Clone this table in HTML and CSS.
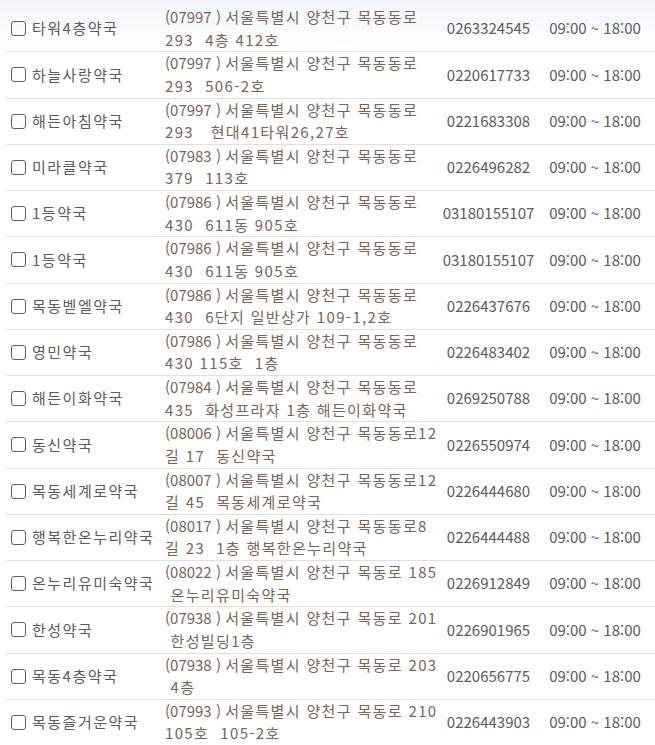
FILE: index.html
```html
<!DOCTYPE html>
<html lang="ko">
<head>
<meta charset="utf-8">
<title>약국 목록</title>
<link rel="stylesheet" href="styles.css">
</head>
<body>
<div class="list">
  <div class="row"><div class="name"><span class="cb"></span><span>타워4층약국</span></div><div class="addr"><span class="zip">(07997 )</span> <span class="st">서울특별시 양천구 목동동로 293 &nbsp;4층 412호</span></div><div class="tel">0263324545</div><div class="time">09:00 ~ 18:00</div></div>
  <div class="row"><div class="name"><span class="cb"></span><span>하늘사랑약국</span></div><div class="addr"><span class="zip">(07997 )</span> <span class="st">서울특별시 양천구 목동동로 293 &nbsp;506-2호</span></div><div class="tel">0220617733</div><div class="time">09:00 ~ 18:00</div></div>
  <div class="row"><div class="name"><span class="cb"></span><span>해든아침약국</span></div><div class="addr"><span class="zip">(07997 )</span> <span class="st">서울특별시 양천구 목동동로 293 &nbsp;&nbsp;현대41타워26,27호</span></div><div class="tel">0221683308</div><div class="time">09:00 ~ 18:00</div></div>
  <div class="row"><div class="name"><span class="cb"></span><span>미라클약국</span></div><div class="addr"><span class="zip">(07983 )</span> <span class="st">서울특별시 양천구 목동동로 379 &nbsp;113호</span></div><div class="tel">0226496282</div><div class="time">09:00 ~ 18:00</div></div>
  <div class="row"><div class="name"><span class="cb"></span><span>1등약국</span></div><div class="addr"><span class="zip">(07986 )</span> <span class="st">서울특별시 양천구 목동동로 430 &nbsp;611동 905호</span></div><div class="tel">03180155107</div><div class="time">09:00 ~ 18:00</div></div>
  <div class="row"><div class="name"><span class="cb"></span><span>1등약국</span></div><div class="addr"><span class="zip">(07986 )</span> <span class="st">서울특별시 양천구 목동동로 430 &nbsp;611동 905호</span></div><div class="tel">03180155107</div><div class="time">09:00 ~ 18:00</div></div>
  <div class="row"><div class="name"><span class="cb"></span><span>목동벧엘약국</span></div><div class="addr"><span class="zip">(07986 )</span> <span class="st">서울특별시 양천구 목동동로 430 &nbsp;6단지 일반상가 109-1,2호</span></div><div class="tel">0226437676</div><div class="time">09:00 ~ 18:00</div></div>
  <div class="row"><div class="name"><span class="cb"></span><span>영민약국</span></div><div class="addr"><span class="zip">(07986 )</span> <span class="st">서울특별시 양천구 목동동로 430 115호 &nbsp;1층</span></div><div class="tel">0226483402</div><div class="time">09:00 ~ 18:00</div></div>
  <div class="row"><div class="name"><span class="cb"></span><span>해든이화약국</span></div><div class="addr"><span class="zip">(07984 )</span> <span class="st">서울특별시 양천구 목동동로 435 &nbsp;화성프라자 1층 해든이화약국</span></div><div class="tel">0269250788</div><div class="time">09:00 ~ 18:00</div></div>
  <div class="row"><div class="name"><span class="cb"></span><span>동신약국</span></div><div class="addr"><span class="zip">(08006 )</span> <span class="st">서울특별시 양천구 목동동로12길 17 &nbsp;동신약국</span></div><div class="tel">0226550974</div><div class="time">09:00 ~ 18:00</div></div>
  <div class="row"><div class="name"><span class="cb"></span><span>목동세계로약국</span></div><div class="addr"><span class="zip">(08007 )</span> <span class="st">서울특별시 양천구 목동동로12길 45 &nbsp;목동세계로약국</span></div><div class="tel">0226444680</div><div class="time">09:00 ~ 18:00</div></div>
  <div class="row"><div class="name"><span class="cb"></span><span>행복한온누리약국</span></div><div class="addr"><span class="zip">(08017 )</span> <span class="st">서울특별시 양천구 목동동로8길 23 &nbsp;1층 행복한온누리약국</span></div><div class="tel">0226444488</div><div class="time">09:00 ~ 18:00</div></div>
  <div class="row"><div class="name"><span class="cb"></span><span>온누리유미숙약국</span></div><div class="addr"><span class="zip">(08022 )</span> <span class="st">서울특별시 양천구 목동로 185</span> <span class="st nw">&nbsp;온누리유미숙약국</span></div><div class="tel">0226912849</div><div class="time">09:00 ~ 18:00</div></div>
  <div class="row"><div class="name"><span class="cb"></span><span>한성약국</span></div><div class="addr"><span class="zip">(07938 )</span> <span class="st">서울특별시 양천구 목동로 201</span> <span class="st nw">&nbsp;한성빌딩1층</span></div><div class="tel">0226901965</div><div class="time">09:00 ~ 18:00</div></div>
  <div class="row"><div class="name"><span class="cb"></span><span>목동4층약국</span></div><div class="addr"><span class="zip">(07938 )</span> <span class="st">서울특별시 양천구 목동로 203</span> <span class="st nw">&nbsp;4층</span></div><div class="tel">0220656775</div><div class="time">09:00 ~ 18:00</div></div>
  <div class="row"><div class="name"><span class="cb"></span><span>목동즐거운약국</span></div><div class="addr"><span class="zip">(07993 )</span> <span class="st">서울특별시 양천구 목동로 210 105호 &nbsp;105-2호</span></div><div class="tel">0226443903</div><div class="time">09:00 ~ 18:00</div></div>
</div>
</body>
</html>
```

FILE: styles.css
```css
html, body {
  margin: 0;
  padding: 0;
  background: #fff;
}

body {
  font-family: "Noto Sans CJK KR", "Noto Sans", sans-serif;
  font-size: 15px;
  color: #5c5c5c;
  background: linear-gradient(to bottom, #f2f5fb 0, #ffffff 46px) no-repeat;
}

.list {
  padding: 6px 0 0 6px;
}

.row {
  display: grid;
  grid-template-columns: 154px 280px 97px 116px;
  align-items: center;
  border-bottom: 1px solid #e0e0e0;
  line-height: 22.63px;
}

.name {
  display: flex;
  align-items: center;
  gap: 6px;
  padding-left: 5px;
  white-space: nowrap;
  letter-spacing: 1.5px;
}

.cb {
  width: 15px;
  height: 15px;
  box-sizing: border-box;
  border: 1.5px solid #5e5e5e;
  border-radius: 3px;
  flex: none;
}

.addr {
  padding-left: 5px;
  color: #7a6558;
}

.st {
  letter-spacing: 1.35px;
}

.nw {
  white-space: nowrap;
}

.tel,
.time {
  text-align: center;
  white-space: nowrap;
}
```
